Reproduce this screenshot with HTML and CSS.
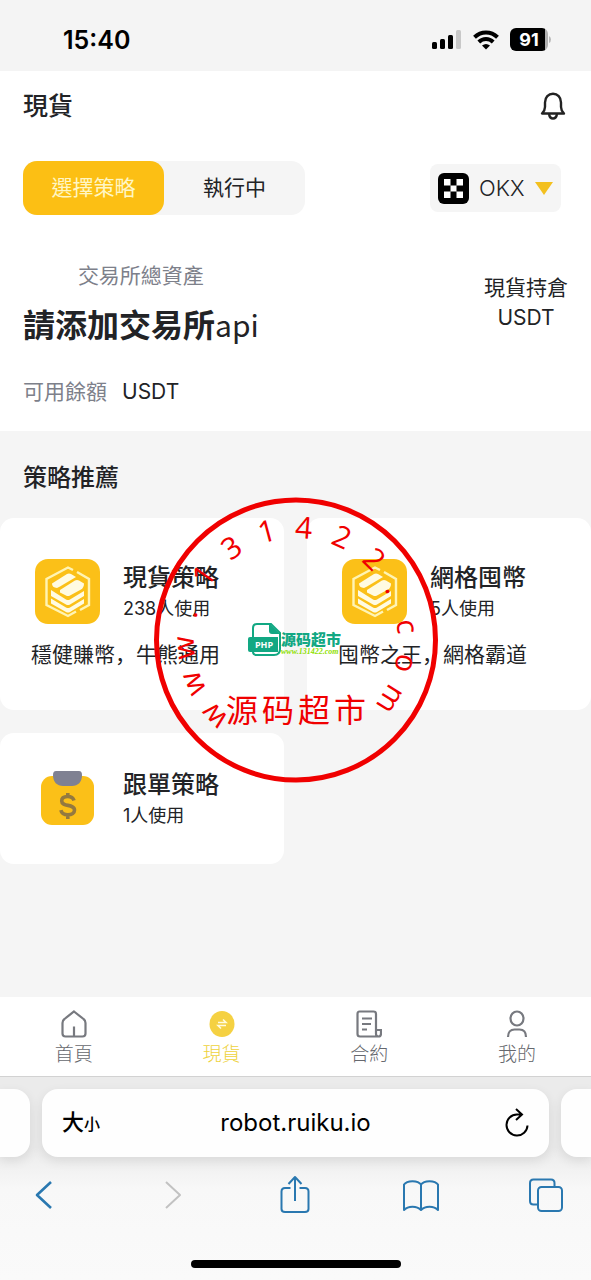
FILE: index.html
```html
<!DOCTYPE html>
<html lang="zh-Hant">

<head>
	<meta charset="utf-8">
	<meta name="viewport" content="width=device-width, initial-scale=1">
	<title>現貨</title>
	<link rel="stylesheet" href="styles.css">
</head>

<body>
	<div class="statusbar">
		<span class="time">15:40</span>
		<div class="status-icons">
			<svg width="30" height="20" viewBox="0 0 30 20">
				<rect x="0" y="12" width="5" height="7" rx="1.5" />
				<rect x="8" y="9" width="5" height="10" rx="1.5" />
				<rect x="16" y="5" width="5" height="14" rx="1.5" />
				<rect x="24" y="0" width="5" height="19" rx="1.5" fill="#c8c8c8" />
			</svg>
			<svg width="26" height="20" viewBox="0 0 26 20" fill="none" stroke="#000" stroke-width="4">
				<path d="M1.5 7.2C8 .8 18 .8 24.500 7.200" />
				<path d="M5.800 12C10 8 16 8 20.200 12" />
				<path d="M13 19.500L9 15.500Q13 12.300 17 15.500Z" fill="#000" stroke="none" />
			</svg>
			<div class="battery-wrap">
				<div class="battery">91</div>
				<svg width="3" height="7" viewBox="0 0 3 7"><path d="M1 0q2 1 2 3.500T1 7z" fill="#b8b8b8" /></svg>
			</div>
		</div>
	</div>

	<header class="header">
		<div class="topbar">
			<h1>現貨</h1>
			<button class="bell" type="button" aria-label="通知">
				<svg width="26" height="28" viewBox="0 0 26 28" fill="none" stroke="#222" stroke-width="2.400" stroke-linejoin="round">
					<path d="M2 21.500h22c-2-2-3-3.500-3-6.500v-4.500C21 5 17.500 1.800 13 1.800S5 5 5 10.500V15c0 3-1 4.500-3 6.500z" />
					<path d="M9 22c.500 3 2 4.500 4 4.500s3.500-1.500 4-4.500" />
				</svg>
			</button>
		</div>

		<div class="controls">
			<div class="segment">
				<button type="button" class="active">選擇策略</button>
				<button type="button">執行中</button>
			</div>
			<div class="exchange">
				<svg width="31" height="31" viewBox="0 0 31 31">
					<rect width="31" height="31" rx="6" />
					<path fill="#fff" d="M6 6h6.500v6.500H6zM18.500 6H25v6.500h-6.500zM12.500 12.500h6v6h-6zM6 18.500h6.500V25H6zM18.500 18.500H25V25h-6.500z" />
				</svg>
				<select aria-label="交易所">
					<option>OKX</option>
				</select>
				<svg class="arrow" width="18" height="13" viewBox="0 0 18 13">
					<path d="M0 0h18L9 13z" fill="#f3c01f" />
				</svg>
			</div>
		</div>

		<div class="assets">
			<div>
				<div class="total">
					<p class="muted">交易所總資產</p>
					<p class="big">請添加交易所<span>api</span></p>
				</div>
				<p class="available"><span class="muted">可用餘額</span> <span>USDT</span></p>
			</div>
			<div class="holding">
				<p>現貨持倉</p>
				<p>USDT</p>
			</div>
		</div>
	</header>

	<main class="content">
		<h2>策略推薦</h2>
		<div class="cards">
			<a class="card with-desc" href="#">
				<div class="card-head">
					<svg class="card-icon" viewBox="0 0 65 65">
						<rect width="65" height="65" rx="13" fill="#fbc018" />
						<g fill="none" stroke="#fff4b4" stroke-width="2.400">
							<path d="M38 11L33 8.500 11.500 20v26L33 57l8-4.500M42 13l12 7v26l-9 5" />
						</g>
						<g fill="#fffbe2">
							<path d="M17 24.500L32 15q2-1 4 0l5 3-16 9.500-3 1.500q-5-.5-5-4.500z" />
							<path d="M25 31l15-9.500q2-1 4 0l5 3q0 4-3 6l-11 6q-2 1-4 0l-6-3z" />
							<path d="M16 31l15 9.500q2 1 4 0l14-8.500v5L35 45.500q-2 1-4 0L16 37z" />
							<path d="M16 39.500l15 9q2 1 4 0L49 40v4.500L35 53q-2 1-4 0l-15-8.500z" />
						</g>
					</svg>
					<div>
						<h3>現貨策略</h3>
						<p>238人使用</p>
					</div>
				</div>
				<p class="desc" lang="zh-Hans">穩健賺幣，牛熊通用</p>
			</a>
			<a class="card with-desc" href="#">
				<div class="card-head">
					<svg class="card-icon" viewBox="0 0 65 65">
						<rect width="65" height="65" rx="13" fill="#fbc018" />
						<g fill="none" stroke="#fff4b4" stroke-width="2.400">
							<path d="M38 11L33 8.500 11.500 20v26L33 57l8-4.500M42 13l12 7v26l-9 5" />
						</g>
						<g fill="#fffbe2">
							<path d="M17 24.500L32 15q2-1 4 0l5 3-16 9.500-3 1.500q-5-.5-5-4.500z" />
							<path d="M25 31l15-9.500q2-1 4 0l5 3q0 4-3 6l-11 6q-2 1-4 0l-6-3z" />
							<path d="M16 31l15 9.500q2 1 4 0l14-8.500v5L35 45.500q-2 1-4 0L16 37z" />
							<path d="M16 39.500l15 9q2 1 4 0L49 40v4.500L35 53q-2 1-4 0l-15-8.500z" />
						</g>
					</svg>
					<div>
						<h3>網格囤幣</h3>
						<p>5人使用</p>
					</div>
				</div>
				<p class="desc" lang="zh-Hans">囤幣之王，網格霸道</p>
			</a>
			<a class="card" href="#">
				<div class="card-head">
					<svg class="card-icon" viewBox="0 0 65 65">
						<rect x="6" y="10" width="53" height="49" rx="11" fill="#fbc018" />
						<path d="M21 5h23q3 0 3 4c0 7-4 11-10 11h-9c-6 0-10-4-10-11q0-4 3-4z" fill="#7f8192" />
						<path d="M39 34.500c-.800-2.600-3-4-6.300-4-3.700 0-6 1.700-6 4.400 0 6.400 12.800 2.500 12.800 9.200 0 2.900-2.600 4.700-6.600 4.700-3.900 0-6.400-1.700-7-4.600M32.800 27v4M32.800 48v5" fill="none" stroke="#94793f" stroke-width="3.600" />
					</svg>
					<div>
						<h3>跟單策略</h3>
						<p>1人使用</p>
					</div>
				</div>
			</a>
		</div>
	</main>

	<nav class="tabbar">
		<a href="#">
			<svg width="26" height="28" viewBox="0 0 26 28">
				<path d="M13 1.500L22.500 9q2 1.500 2 4v10.500q0 3-3 3h-17q-3 0-3-3V13q0-2.500 2-4zM13 16.500v10" />
			</svg>
			首頁
		</a>
		<a href="#" class="current">
			<svg width="26" height="28" viewBox="0 0 26 28">
				<ellipse cx="13" cy="14" rx="12.500" ry="13" fill="#f5d142" stroke="none" />
				<path d="M9 12.500h8l-3-3M17 15.500H9l3 3" stroke="#fffbe0" stroke-width="1.600" />
			</svg>
			現貨
		</a>
		<a href="#">
			<svg width="26" height="28" viewBox="0 0 26 28">
				<path d="M20 19V4q0-2.500-2.500-2.500h-14Q1.500 1.500 1.500 4v20q0 2.500 2.500 2.500h18.500q2.500 0 2.500-3V20h-5v4q0 2.500 2.500 2.500M6 8.500h10M6 14h9M6 19.500h5" />
			</svg>
			合約
		</a>
		<a href="#">
			<svg width="26" height="28" viewBox="0 0 26 28">
				<ellipse cx="13" cy="8.500" rx="6.500" ry="7" />
				<path d="M4 27c0-5 2.500-7.500 6.500-7.500h5c4 0 6.500 2.500 6.500 7.500" />
			</svg>
			我的
		</a>
	</nav>

	<footer class="browser">
		<div class="address-row">
			<div class="stub left"></div>
			<div class="address">
				<button type="button" class="text-size">大<small>小</small></button>
				<input type="text" aria-label="網址" value="robot.ruiku.io">
				<button type="button" class="reload" aria-label="重新載入">
					<svg width="24" height="30" viewBox="0 0 24 30" fill="none" stroke="#000" stroke-width="2">
						<path d="M22.500 17.500a10.500 10.500 0 1 1-10.500-11h4.500M11 1l6 5.500-6 5.500" />
					</svg>
				</button>
			</div>
			<div class="stub right"></div>
		</div>
		<div class="toolbar">
			<button type="button" aria-label="返回">
				<svg width="36" height="40" viewBox="0 0 36 40"><path d="M25 7L11 20l14 13" stroke-width="2.600" /></svg>
			</button>
			<button type="button" aria-label="前進" disabled>
				<svg width="36" height="40" viewBox="0 0 36 40"><path d="M14 7l14 13-14 13" /></svg>
			</button>
			<button type="button" aria-label="分享">
				<svg width="36" height="40" viewBox="0 0 36 40">
					<path d="M13.500 13H8q-3.500 0-3.500 3.500V34Q4.500 37 8 37h20q3.500 0 3.500-3V16.500Q31.500 13 28 13h-5.500M18 26V2M11.500 9L18 2l6.500 7" />
				</svg>
			</button>
			<button type="button" aria-label="書籤">
				<svg width="36" height="40" viewBox="0 0 36 40">
					<path d="M18 9.500C15 5 4 5 1 9.500V35c4-4.500 13-4.500 17 0 4-4.500 13-4.500 17 0V9.500C32 5 21 5 18 9.500zM18 9.500V35" />
				</svg>
			</button>
			<button type="button" aria-label="分頁">
				<svg width="36" height="40" viewBox="0 0 36 40">
					<rect x="10" y="12" width="24" height="24" rx="3.500" />
					<path d="M10 29.500H5.500Q2 29.500 2 26V8q0-3.500 3.500-3.500H23q3.500 0 3.500 3.500v4" />
				</svg>
			</button>
		</div>
		<div class="home-indicator"></div>
	</footer>

	<!-- stamp over the page -->
	<svg class="stamp" width="284" height="286" viewBox="-142 -143 284 286">
		<ellipse rx="139.500" ry="140" fill="none" stroke="#f00000" stroke-width="5" />
		<g class="ring">
			<text transform="rotate(-133) translate(0 -102)">w</text>
			<text transform="rotate(-113) translate(0 -102)">w</text>
			<text transform="rotate(-94) translate(0 -102)">w</text>
			<text transform="rotate(-76) translate(0 -102)">.</text>
			<text transform="rotate(-55) translate(0 -102)">1</text>
			<text transform="rotate(-35) translate(0 -102)">3</text>
			<text transform="rotate(-15) translate(0 -102)">1</text>
			<text transform="rotate(4) translate(0 -102)">4</text>
			<text transform="rotate(24) translate(0 -102)">2</text>
			<text transform="rotate(44) translate(0 -102)">2</text>
			<text transform="rotate(62) translate(0 -102)">.</text>
			<text transform="rotate(83) translate(0 -102)">c</text>
			<text transform="rotate(102) translate(0 -102)">o</text>
			<text transform="rotate(122) translate(0 -102)">m</text>
		</g>
		<text class="stamp-name" y="82" x="-54 -18 18 54">源码超市</text>
		<g fill="#12a883">
			<path d="M-43-3v-9q0-4 4-4h14l9 9V9q0 6-6 6h-17q-4 0-4-3" fill="none" stroke="#12a883" stroke-width="2" />
			<path d="M-27-17v8q0 3 3 3h8z" />
			<path d="M-46-3h28V12h-28q-2 0-2-2v-11q0-2 2-2z" />
			<text class="php" x="-32" y="8">PHP</text>
			<text class="logo-name" x="-15" y="5">源码超市</text>
		</g>
		<text class="logo-url" x="-15" y="14">www.131422.com</text>
	</svg>
</body>

</html>
```

FILE: styles.css
```css
* {
	box-sizing: border-box;
}

body {
	margin: 0;
	min-height: 100vh;
	display: flex;
	flex-direction: column;
	position: relative;
	overflow-x: hidden;
	background: #f5f5f5;
	color: #222326;
	font-family: Inter, "Noto Sans CJK SC", sans-serif;
	font-size: 21px;
	line-height: 30px;
}

h1,
h2,
h3,
p {
	margin: 0;
}

button,
input,
select {
	font: inherit;
	color: inherit;
	background: none;
	border: 0;
	padding: 0;
}

svg {
	display: block;
	flex: none;
}

a {
	color: inherit;
	text-decoration: none;
}

/* status bar */
.statusbar {
	height: 71px;
	padding: 8px 40px 0 63px;
	display: flex;
	align-items: center;
	justify-content: space-between;
	background: #f4f4f4;
	color: #000;
}

.time {
	font-size: 25px;
	font-weight: 600;
}

.status-icons {
	display: flex;
	align-items: center;
	gap: 11px;
}

.battery-wrap {
	display: flex;
	align-items: center;
}

.battery {
	width: 38px;
	height: 23px;
	border-radius: 6px;
	background: linear-gradient(to right, #000 92%, #b0b0b0 92%);
	color: #fff;
	font-size: 18px;
	font-weight: 700;
	line-height: 23px;
	text-align: center;
}

/* header */
.header {
	background: #fff;
	padding: 0 23px 24px;
}

.topbar {
	height: 70px;
	display: flex;
	align-items: center;
	justify-content: space-between;
}

.topbar h1 {
	font-size: 25px;
	font-weight: 500;
}

.bell {
	padding-right: 2px;
}

.controls {
	margin-top: 20px;
	display: flex;
	align-items: center;
	justify-content: space-between;
}

.segment {
	display: flex;
	background: #f5f5f5;
	border-radius: 14px;
}

.segment button {
	width: 141px;
	height: 54px;
	border-radius: 14px;
}

.segment .active {
	background: #fcbf14;
	color: #fff6c4;
}

.exchange {
	display: flex;
	align-items: center;
	gap: 10px;
	height: 48px;
	margin-right: 7px;
	padding: 0 8px;
	background: #f5f5f5;
	border-radius: 8px;
}

.exchange select {
	appearance: none;
	font-size: 22px;
	font-weight: 300;
}

.assets {
	display: flex;
	justify-content: space-between;
	margin-top: 46px;
}

.muted {
	color: #7d808a;
}

.total {
	text-align: center;
}

.big {
	margin-top: 11px;
	font-size: 32px;
	line-height: 48px;
	font-weight: 700;
}

.big span {
	font-family: "Noto Sans CJK SC", sans-serif;
	font-size: 30px;
	line-height: 30px;
	font-weight: 400;
}

.available {
	display: flex;
	gap: 15px;
	margin-top: 27px;
}

.holding {
	margin-top: 12px;
	text-align: center;
}

/* strategies */
.content {
	flex: 1;
}

.content h2 {
	padding: 32px 23px 25px;
	font-size: 24px;
	font-weight: 500;
}

.cards {
	display: grid;
	grid-template-columns: 1fr 1fr;
	gap: 23px;
}

.card {
	padding: 33px 20px 33px 31px;
	background: #fff;
	border-radius: 14px;
}

.with-desc {
	padding-top: 41px;
	padding-bottom: 40px;
}

.card-head {
	display: flex;
	align-items: center;
	gap: 23px;
	padding-left: 4px;
}

.card-icon {
	width: 65px;
	height: 65px;
}

.card h3 {
	font-size: 24px;
	line-height: 34px;
	font-weight: 500;
}

.card-head p {
	font-size: 18px;
	line-height: 28px;
}

.desc {
	margin-top: 16px;
	white-space: nowrap;
}

/* tabs */
.tabbar {
	display: grid;
	grid-template-columns: repeat(4, 1fr);
	height: 80px;
	padding-top: 13px;
	background: #fff;
	border-bottom: 1px solid #d2d2d2;
}

.tabbar a {
	display: flex;
	flex-direction: column;
	align-items: center;
	gap: 4px;
	color: #66686e;
	font-size: 19px;
	line-height: 26px;
	font-weight: 300;
}

.tabbar svg {
	fill: none;
	stroke: #77797f;
	stroke-width: 2.2;
}

.tabbar .current {
	color: #eed23c;
}

/* safari bars */
.browser {
	padding: 12px 0;
	background: linear-gradient(#ebebeb, #ebebeb 35%, #f8f8f8 55%, #fafafa);
}

.address-row {
	display: flex;
	gap: 12px;
	height: 68px;
}

.address,
.stub {
	background: #fefefe;
	box-shadow: 0 4px 12px rgba(0, 0, 0, 0.09);
}

.stub {
	flex: none;
	width: 30px;
}

.left {
	border-radius: 0 16px 16px 0;
}

.right {
	border-radius: 16px 0 0 16px;
}

.address {
	flex: 1;
	min-width: 0;
	display: flex;
	align-items: center;
	padding: 0 20px;
	border-radius: 16px;
	color: #000;
}

.address button {
	flex: none;
	width: 40px;
}

.address input {
	flex: 1;
	min-width: 0;
	font-size: 24px;
	text-align: center;
}

.text-size {
	font-size: 22px;
	font-weight: 500;
	text-align: left;
	white-space: nowrap;
}

.text-size small {
	font-size: 16px;
}

.reload {
	display: flex;
	justify-content: flex-end;
}

.toolbar {
	display: flex;
	justify-content: space-between;
	margin-top: 18px;
	padding: 0 27px 0 26px;
}

.toolbar svg {
	fill: none;
	stroke: #2a78b0;
	stroke-width: 2;
	stroke-linejoin: round;
}

.toolbar button:disabled svg {
	stroke: #c2c2c2;
}

.home-indicator {
	width: 210px;
	height: 8px;
	margin: 45px auto 0;
	border-radius: 4px;
	background: #000;
}

/* stamp */
.stamp {
	position: absolute;
	top: 50%;
	left: 50%;
	transform: translate(-50%, -50%);
	pointer-events: none;
	text-anchor: middle;
}

.ring {
	fill: #f00000;
	font-family: "Open Sans", sans-serif;
	font-size: 30px;
}

.stamp-name {
	fill: #f00000;
	font-family: "Noto Sans CJK SC", sans-serif;
	font-size: 32px;
}

.php {
	fill: #fff;
	font-family: "Open Sans", sans-serif;
	font-size: 9px;
	font-weight: 700;
}

.logo-name {
	font-family: "Noto Sans CJK SC", sans-serif;
	font-size: 15px;
	font-weight: 900;
	text-anchor: start;
}

.logo-url {
	fill: #8ee000;
	font-family: "Liberation Serif", serif;
	font-size: 8px;
	font-style: italic;
	font-weight: 700;
	text-anchor: start;
}
```
